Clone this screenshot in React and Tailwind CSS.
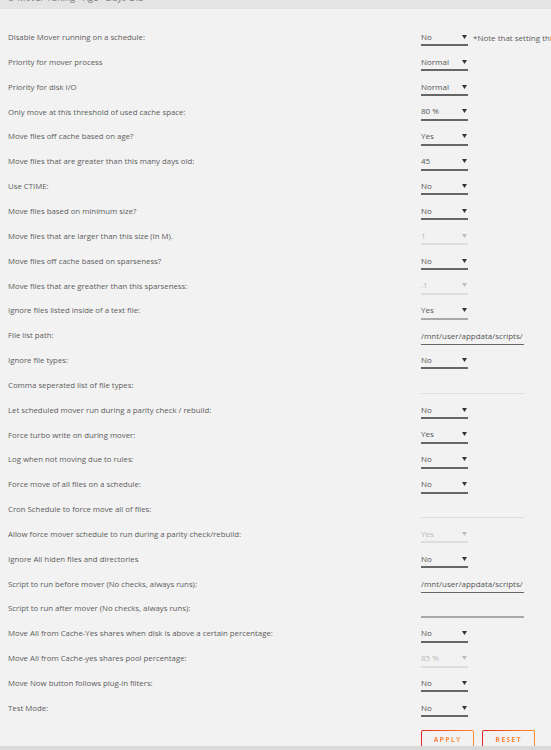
import React from 'react';

const rows = [
  { label: 'Disable Mover running on a schedule:', type: 'select', value: 'No', note: '*Note that setting this to Yes will disable the mover schedule entirely' },
  { label: 'Priority for mover process', type: 'select', value: 'Normal' },
  { label: 'Priority for disk I/O', type: 'select', value: 'Normal' },
  { label: 'Only move at this threshold of used cache space:', type: 'select', value: '80 %' },
  { label: 'Move files off cache based on age?', type: 'select', value: 'Yes' },
  { label: 'Move files that are greater than this many days old:', type: 'select', value: '45' },
  { label: 'Use CTIME:', type: 'select', value: 'No' },
  { label: 'Move files based on minimum size?', type: 'select', value: 'No' },
  { label: 'Move files that are larger than this size (In M).', type: 'select', value: '1', disabled: true },
  { label: 'Move files off cache based on sparseness?', type: 'select', value: 'No' },
  { label: 'Move files that are greather than this sparseness:', type: 'select', value: '.1', disabled: true },
  { label: 'Ignore files listed inside of a text file:', type: 'select', value: 'Yes', soft: true },
  { label: 'File list path:', type: 'text', value: '/mnt/user/appdata/scripts/' },
  { label: 'Ignore file types:', type: 'select', value: 'No' },
  { label: 'Comma seperated list of file types:', type: 'text', value: '', disabled: true },
  { label: 'Let scheduled mover run during a parity check / rebuild:', type: 'select', value: 'No' },
  { label: 'Force turbo write on during mover:', type: 'select', value: 'Yes' },
  { label: 'Log when not moving due to rules:', type: 'select', value: 'No' },
  { label: 'Force move of all files on a schedule:', type: 'select', value: 'No' },
  { label: 'Cron Schedule to force move all of files:', type: 'text', value: '', disabled: true },
  { label: 'Allow force mover schedule to run during a parity check/rebuild:', type: 'select', value: 'Yes', disabled: true },
  { label: 'Ignore All hiden files and directories', type: 'select', value: 'No' },
  { label: 'Script to run before mover (No checks, always runs):', type: 'text', value: '/mnt/user/appdata/scripts/' },
  { label: 'Script to run after mover (No checks, always runs):', type: 'text', value: '', thick: true },
  { label: 'Move All from Cache-Yes shares when disk is above a certain percentage:', type: 'select', value: 'No' },
  { label: 'Move All from Cache-yes shares pool percentage:', type: 'select', value: '85 %', disabled: true },
  { label: 'Move Now button follows plug-in filters:', type: 'select', value: 'No' },
  { label: 'Test Mode:', type: 'select', value: 'No' },
];

const Caret = ({ light }) => (
  <svg width="5" height="4" viewBox="0 0 5 4" className="shrink-0">
    <path d="M0 0 L5 0 L2.5 4 Z" fill={light ? '#bbbbbb' : '#333333'} />
  </svg>
);

const SelectField = ({ value, disabled, soft }) => {
  const line = disabled ? 'border-[#dddddd]' : soft ? 'border-[#a8a8a8]' : 'border-[#666666]';
  return (
    <div className={`flex h-[17px] w-[47px] items-center justify-between border-b-2 pr-[1px] ${line}`}>
      <span className={disabled ? 'text-[#bbbbbb]' : 'text-[#555555]'}>{value}</span>
      <Caret light={disabled} />
    </div>
  );
};

const TextField = ({ value, disabled, thick }) => {
  const line = thick
    ? 'border-b-2 border-[#a8a8a8]'
    : disabled
      ? 'border-b border-[#dddddd]'
      : 'border-b border-[#666666]';
  return (
    <div className={`flex h-[17px] w-[103px] items-center whitespace-nowrap ${line}`}>
      <span className="text-[#555555]">{value}</span>
    </div>
  );
};

const Row = ({ row }) => (
  <div className="flex h-[24.85px] items-center">
    <div className="w-[421px] shrink-0 whitespace-nowrap pl-2 text-[7.8px] text-[#5c5c5c]">{row.label}</div>
    <div className="flex shrink-0 items-center gap-[5px]">
      {row.type === 'select' ? (
        <SelectField value={row.value} disabled={row.disabled} soft={row.soft} />
      ) : (
        <TextField value={row.value} disabled={row.disabled} thick={row.thick} />
      )}
      {row.note && <span className="whitespace-nowrap text-[#5c5c5c]">{row.note}</span>}
    </div>
  </div>
);

const GradientButton = ({ children }) => (
  <button className="h-[24px] w-[53px] rounded-[2px] bg-gradient-to-r from-[#e22828] to-[#ff8c2f] p-[1px]">
    <span className="flex h-full w-full items-start justify-center rounded-[1px] bg-[#f2f2f2] pt-[4px]">
      <span className="bg-gradient-to-r from-[#ff7a3a] to-[#ff9a40] bg-clip-text text-[7px] font-bold tracking-[1.2px] text-transparent">
        {children}
      </span>
    </span>
  </button>
);

export default function App() {
  return (
    <div
      className="h-[750px] w-[551px] overflow-hidden bg-[#f2f2f2] text-[8px]"
      style={{ fontFamily: '"Open Sans", "Liberation Sans", sans-serif' }}
    >
      {/* section title bar, scrolled mostly out of view */}
      <div className="h-[9px] overflow-hidden bg-[#e4e4e4]">
        <div className="mt-[-9px] whitespace-nowrap pl-[7px] text-[9px] text-[#777777]">
          ⚙ Mover Tuning - Age - Days Old
        </div>
      </div>

      <div className="pt-[16.5px]">
        {rows.map((row) => (
          <Row key={row.label} row={row} />
        ))}
      </div>

      <div className="mt-[9px] flex gap-[8px] pl-[421px]">
        <GradientButton>APPLY</GradientButton>
        <GradientButton>RESET</GradientButton>
      </div>

      {/* footer strip */}
      <div className="fixed bottom-0 left-0 h-[4px] w-[551px] bg-[#d9d9d9]" />
    </div>
  );
}
